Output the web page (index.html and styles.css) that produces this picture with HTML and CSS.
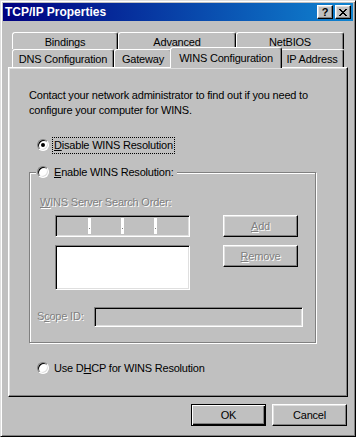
FILE: index.html
```html
<!DOCTYPE html>
<html lang="en">
<head>
  <meta charset="UTF-8" />
  <title>TCP/IP Properties</title>
  <link rel="stylesheet" href="styles.css">
</head>
<body>
  <div class="window">
    <div class="titlebar">
      <span class="title">TCP/IP Properties</span>
      <div class="title-buttons">
        <span class="tbtn help">?</span>
        <span class="tbtn close">
          <svg width="8" height="7" viewBox="0 0 8 7" shape-rendering="crispEdges">
            <path d="M0 0h2v1h-2z M6 0h2v1h-2z M1 1h2v1h-2z M5 1h2v1h-2z M2 2h4v1h-4z M3 3h2v1h-2z M2 4h4v1h-4z M1 5h2v1h-2z M5 5h2v1h-2z M0 6h2v1h-2z M6 6h2v1h-2z" fill="#000"/>
          </svg>
        </span>
      </div>
    </div>

    <div class="tabs">
      <div class="tab-row back">
        <div class="tab w-bindings">Bindings</div>
        <div class="tab w-advanced">Advanced</div>
        <div class="tab w-netbios">NetBIOS</div>
      </div>
      <div class="tab-row front">
        <div class="tab w-dns">DNS Configuration</div>
        <div class="tab w-gateway">Gateway</div>
        <div class="tab w-wins active">WINS Configuration</div>
        <div class="tab w-ip">IP Address</div>
      </div>
    </div>

    <div class="panel">
      <p class="desc">Contact your network administrator to find out if you need to configure your computer for WINS.</p>

      <div class="option first">
        <span class="radio checked"></span>
        <span class="label focus"><u>D</u>isable WINS Resolution</span>
      </div>

      <fieldset class="group">
        <legend>
          <span class="option inline">
            <span class="radio"></span>
            <span class="label"><u>E</u>nable WINS Resolution:</span>
          </span>
        </legend>

        <div class="group-label disabled"><u>W</u>INS Server Search Order:</div>

        <div class="server-grid">
          <div class="ipfield">
            <span class="seg"></span><span class="dot"></span>
            <span class="seg"></span><span class="dot"></span>
            <span class="seg"></span><span class="dot"></span>
            <span class="seg"></span>
          </div>
          <div class="btn disabled"><span><u>A</u>dd</span></div>
          <div class="listbox"></div>
          <div class="btn disabled"><span><u>R</u>emove</span></div>
        </div>

        <div class="scope">
          <span class="scope-label disabled">S<u>c</u>ope ID:</span>
          <span class="scope-field"></span>
        </div>
      </fieldset>

      <div class="option dhcp">
        <span class="radio"></span>
        <span class="label">Use D<u>H</u>CP for WINS Resolution</span>
      </div>
    </div>

    <div class="footer">
      <div class="btn default">OK</div>
      <div class="btn">Cancel</div>
    </div>
  </div>
</body>
</html>
```

FILE: styles.css
```css
body {
  margin: 0;
  background: #c0c0c0;
  font-family: "Liberation Sans", Arial, sans-serif;
  font-size: 11px;
  letter-spacing: -0.2px;
  color: #000;
}

u {
  text-decoration: underline;
  text-underline-offset: 1px;
}

.window {
  width: 356px;
  height: 437px;
  box-sizing: border-box;
  border: 1px solid;
  border-color: #dfdfdf #000 #000 #dfdfdf;
  box-shadow: inset 1px 1px #fff, inset -1px -1px #808080;
  padding: 2px;
  background: #c0c0c0;
}

/* title bar */
.titlebar {
  height: 18px;
  display: flex;
  align-items: center;
  justify-content: space-between;
  padding: 0 2px 0 2px;
  background: linear-gradient(to right, #000080, #1084d0);
  color: #fff;
}

.title {
  font-weight: bold;
  font-size: 12px;
  letter-spacing: 0;
}

.title-buttons {
  display: flex;
  gap: 2px;
}

.tbtn {
  width: 16px;
  height: 14px;
  box-sizing: border-box;
  display: flex;
  align-items: center;
  justify-content: center;
  background: #c0c0c0;
  border: 1px solid;
  border-color: #fff #000 #000 #fff;
  box-shadow: inset -1px -1px #808080, inset 1px 1px #dfdfdf;
  color: #000;
  font-weight: bold;
  font-size: 11px;
  line-height: 12px;
}

/* tabs */
.tabs {
  margin: 11px 0 0 9px;
  width: 332px;
}

.tab-row {
  display: flex;
}

.tab {
  box-sizing: border-box;
  border: 1px solid;
  border-bottom: none;
  border-color: #fff #000 transparent #fff;
  border-radius: 3px 3px 0 0;
  box-shadow: inset -1px 0 #808080;
  background: #c0c0c0;
  text-align: center;
  padding-top: 3px;
  white-space: nowrap;
}

.back .tab { height: 17px; }
.front .tab { height: 18px; padding-top: 3px; }

.w-bindings { width: 106px; }
.w-advanced { width: 118px; }
.w-netbios { width: 108px; }
.w-dns { width: 102px; }
.w-gateway { width: 58px; }
.w-wins { width: 108px; }
.w-ip { width: 64px; }

.tab.active {
  position: relative;
  z-index: 2;
  height: 21px;
  width: 112px;
  margin: -2px -2px -1px -2px;
  padding-top: 4px;
}

/* page */
.panel {
  position: relative;
  z-index: 1;
  height: 330px;
  margin: 0 5px;
  box-sizing: border-box;
  border: 1px solid;
  border-color: #fff #000 #000 #fff;
  box-shadow: inset -1px -1px #808080, inset 1px 1px #dfdfdf;
  padding: 20px 0 0 20px;
}

.desc {
  margin: 0;
  width: 300px;
  line-height: 15px;
}

.option {
  display: flex;
  align-items: center;
  height: 16px;
  margin-left: 8px;
}

.option.first { margin-top: 19px; }
.option.dhcp { margin-top: 17px; }
.option.inline { margin-left: 0; }

.radio {
  position: relative;
  flex: none;
  width: 12px;
  height: 12px;
  box-sizing: border-box;
  border-radius: 50%;
  background: #fff;
  border: 1px solid;
  border-color: #808080 #fff #fff #808080;
  box-shadow: inset 1px 1px #000, inset -1px -1px #dfdfdf;
  margin-right: 4px;
}

.radio.checked::after {
  content: "";
  position: absolute;
  left: 3px;
  top: 3px;
  width: 4px;
  height: 4px;
  border-radius: 50%;
  background: #000;
}

.label {
  padding: 0 1px;
  line-height: 15px;
}

.focus {
  outline: 1px dotted #000;
}

.group {
  width: 287px;
  margin: 11px 0 0 0;
  box-sizing: border-box;
  border: 1px solid #808080;
  box-shadow: inset 1px 1px #fff, 1px 1px #fff;
  padding: 0 0 15px 10px;
  min-width: 0;
}

.group legend {
  margin-left: -4px;
  padding: 0 2px 0 1px;
  background: #c0c0c0;
}

.disabled {
  color: #808080;
  text-shadow: 1px 1px #fff;
}

.group-label {
  margin-top: 15px;
  line-height: 15px;
}

.server-grid {
  display: grid;
  grid-template-columns: 135px 75px;
  grid-template-rows: 22px 45px;
  gap: 8px 33px;
  margin: 5px 0 0 15px;
}

.ipfield,
.listbox,
.scope-field {
  box-sizing: border-box;
  border: 1px solid;
  border-color: #808080 #fff #fff #808080;
  box-shadow: inset 1px 1px #000, inset -1px -1px #dfdfdf;
}

.ipfield {
  display: flex;
  padding: 2px 2px 2px 2px;
  background: #c0c0c0;
}

.seg {
  flex: 1;
}

.dot {
  position: relative;
  width: 3px;
  background: #fff;
}

.dot::after {
  content: "";
  position: absolute;
  left: 1px;
  bottom: 5px;
  width: 1px;
  height: 1px;
  background: #808080;
}

.listbox {
  background: #fff;
}

.btn {
  width: 75px;
  height: 22px;
  box-sizing: border-box;
  display: flex;
  align-items: center;
  justify-content: center;
  background: #c0c0c0;
  border: 1px solid;
  border-color: #fff #000 #000 #fff;
  box-shadow: inset -1px -1px #808080, inset 1px 1px #dfdfdf;
}

.server-grid .btn {
  align-self: start;
}

.btn.default {
  border-color: #000;
  box-shadow: inset 1px 1px #fff, inset -1px -1px #000, inset -2px -2px #808080;
}

.scope {
  display: flex;
  align-items: center;
  margin: 17px 0 0 -3px;
}

.scope-label {
  width: 57px;
  margin-top: -3px;
}

.scope-field {
  width: 209px;
  height: 20px;
  background: #c0c0c0;
}

.footer {
  display: flex;
  justify-content: flex-end;
  gap: 6px;
  margin: 7px 6px 0 0;
}
```
